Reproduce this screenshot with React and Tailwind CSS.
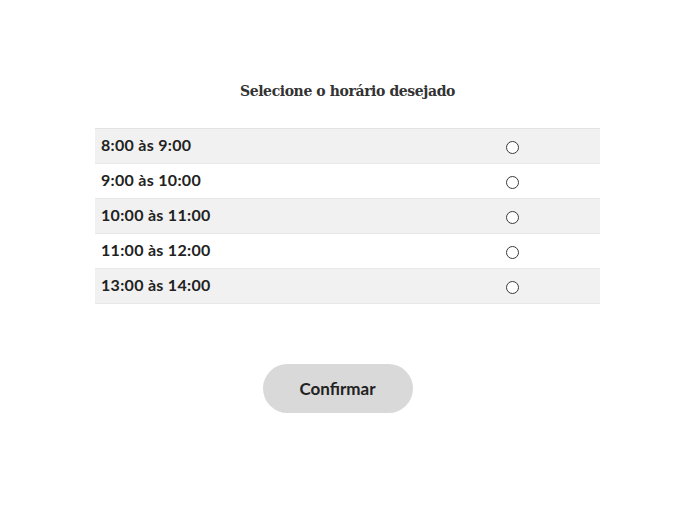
import { useState } from "react";

const slots = ["8:00 às 9:00", "9:00 às 10:00", "10:00 às 11:00", "11:00 às 12:00", "13:00 às 14:00"];

export default function App() {
    const [selected, setSelected] = useState(null);

    return (
        <div className="w-[675px] h-[524px] bg-white flex flex-col items-center">
            <div className="w-[505px] ml-[20px] pt-[80px]">
                {/* Header */}
                <h1 className="text-center text-[14px] font-bold text-[#333] font-['DejaVu_Serif',serif] tracking-[-0.4px] leading-[22px]">
                    Selecione o horário desejado
                </h1>

                {/* Slots */}
                <div className="mt-[26px] border-t border-[#e2e2e2]">
                    {slots.map((slot, i) => (
                        <label
                            key={slot}
                            className={`flex items-center h-[35px] border-b border-[#e8e8e8] cursor-pointer ${
                                i % 2 === 0 ? "bg-[#f1f1f1]" : "bg-white"
                            }`}
                        >
                            <span className="pl-[6px] flex-1 text-[16px] font-bold text-[#222] font-['Lato',sans-serif] tracking-[0.3px] -mt-[2px]">
                                {slot}
                            </span>
                            <span className="w-[94px] flex pt-[2px]">
                                <input
                                    type="radio"
                                    name="slot"
                                    checked={selected === i}
                                    onChange={() => setSelected(i)}
                                    className="appearance-none w-[13px] h-[13px] m-0 rounded-full border border-[#3a3a3a] bg-white checked:bg-[#333] checked:shadow-[inset_0_0_0_2px_white]"
                                />
                            </span>
                        </label>
                    ))}
                </div>
            </div>

            <button className="mt-[60px] w-[150px] h-[49px] rounded-full bg-[#d9d9d9] text-[17px] font-bold text-[#222] font-['Lato',sans-serif]">
                Confirmar
            </button>
        </div>
    );
}
